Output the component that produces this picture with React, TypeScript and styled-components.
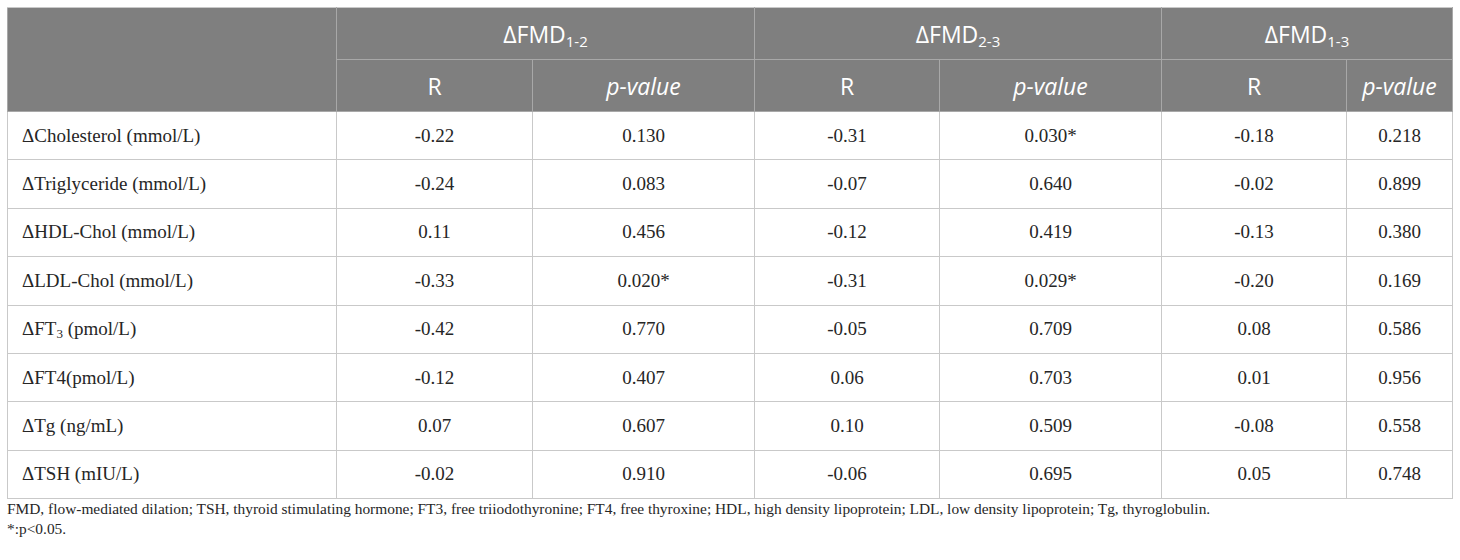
import React from "react";
import styled, { createGlobalStyle } from "styled-components";

const GlobalStyle = createGlobalStyle`
	body {
		margin: 7px;
		background: #fff;
	}
`;

interface Row {
	label: React.ReactNode;
	values: string[];
}

const rows: Row[] = [
	{ label: "ΔCholesterol (mmol/L)", values: ["-0.22", "0.130", "-0.31", "0.030*", "-0.18", "0.218"] },
	{ label: "ΔTriglyceride (mmol/L)", values: ["-0.24", "0.083", "-0.07", "0.640", "-0.02", "0.899"] },
	{ label: "ΔHDL-Chol (mmol/L)", values: ["0.11", "0.456", "-0.12", "0.419", "-0.13", "0.380"] },
	{ label: "ΔLDL-Chol (mmol/L)", values: ["-0.33", "0.020*", "-0.31", "0.029*", "-0.20", "0.169"] },
	{
		label: (
			<>
				ΔFT<sub>3</sub> (pmol/L)
			</>
		),
		values: ["-0.42", "0.770", "-0.05", "0.709", "0.08", "0.586"],
	},
	{ label: "ΔFT4(pmol/L)", values: ["-0.12", "0.407", "0.06", "0.703", "0.01", "0.956"] },
	{ label: "ΔTg (ng/mL)", values: ["0.07", "0.607", "0.10", "0.509", "-0.08", "0.558"] },
	{ label: "ΔTSH (mIU/L)", values: ["-0.02", "0.910", "-0.06", "0.695", "0.05", "0.748"] },
];

const groups = ["1-2", "2-3", "1-3"];
const colWidths = [329, 196, 222, 185, 222, 185, 106];

const Wrapper = styled.div`
	width: 1445px;
`;

const Table = styled.table`
	width: 1445px;
	border-collapse: collapse;
	table-layout: fixed;
	border: 1px solid #c9c9c9;
`;

const HeadCell = styled.th<{ italic?: boolean }>`
	background: #7f7f7f;
	color: #fff;
	font-family: "Open Sans", "Liberation Sans", sans-serif;
	font-weight: 400;
	font-size: 23px;
	font-style: ${(p) => (p.italic ? "italic" : "normal")};
	text-align: center;
	height: 51px;
	padding: 0;
	border: 1px solid #a8a8a8;
	border-top-color: #c9c9c9;
`;

const Sub = styled.sub`
	font-size: 15px;
	vertical-align: -4px;
	line-height: 0;
`;

const Cell = styled.td<{ first?: boolean }>`
	font-family: "Liberation Serif", "DejaVu Serif", serif;
	font-size: 19px;
	color: #262626;
	height: 47.4px;
	padding: 0 ${(p) => (p.first ? "14px" : "0")};
	text-align: ${(p) => (p.first ? "left" : "center")};
	border: 1px solid #c9c9c9;

	sub {
		font-size: 13px;
		vertical-align: -3px;
		line-height: 0;
	}
`;

const Footnote = styled.div`
	font-family: "Liberation Serif", "DejaVu Serif", serif;
	font-size: 15.4px;
	line-height: 20px;
	color: #262626;
	white-space: nowrap;
`;

const App: React.FC = () => {
	return (
		<Wrapper>
			<GlobalStyle />
			<Table>
				<colgroup>
					{colWidths.map((w, i) => (
						<col key={i} style={{ width: w }} />
					))}
				</colgroup>
				<thead>
					<tr>
						<HeadCell rowSpan={2} />
						{groups.map((g) => (
							<HeadCell key={g} colSpan={2}>
								ΔFMD<Sub>{g}</Sub>
							</HeadCell>
						))}
					</tr>
					<tr>
						{groups.map((g) => (
							<React.Fragment key={g}>
								<HeadCell>R</HeadCell>
								<HeadCell italic>p-value</HeadCell>
							</React.Fragment>
						))}
					</tr>
				</thead>
				<tbody>
					{rows.map((row, i) => (
						<tr key={i}>
							<Cell first>{row.label}</Cell>
							{row.values.map((v, j) => (
								<Cell key={j}>{v}</Cell>
							))}
						</tr>
					))}
				</tbody>
			</Table>
			<Footnote>
				FMD, flow-mediated dilation; TSH, thyroid stimulating hormone; FT3, free triiodothyronine; FT4, free
				thyroxine; HDL, high density lipoprotein; LDL, low density lipoprotein; Tg, thyroglobulin.
			</Footnote>
			<Footnote>*:p&lt;0.05.</Footnote>
		</Wrapper>
	);
};

export default App;
